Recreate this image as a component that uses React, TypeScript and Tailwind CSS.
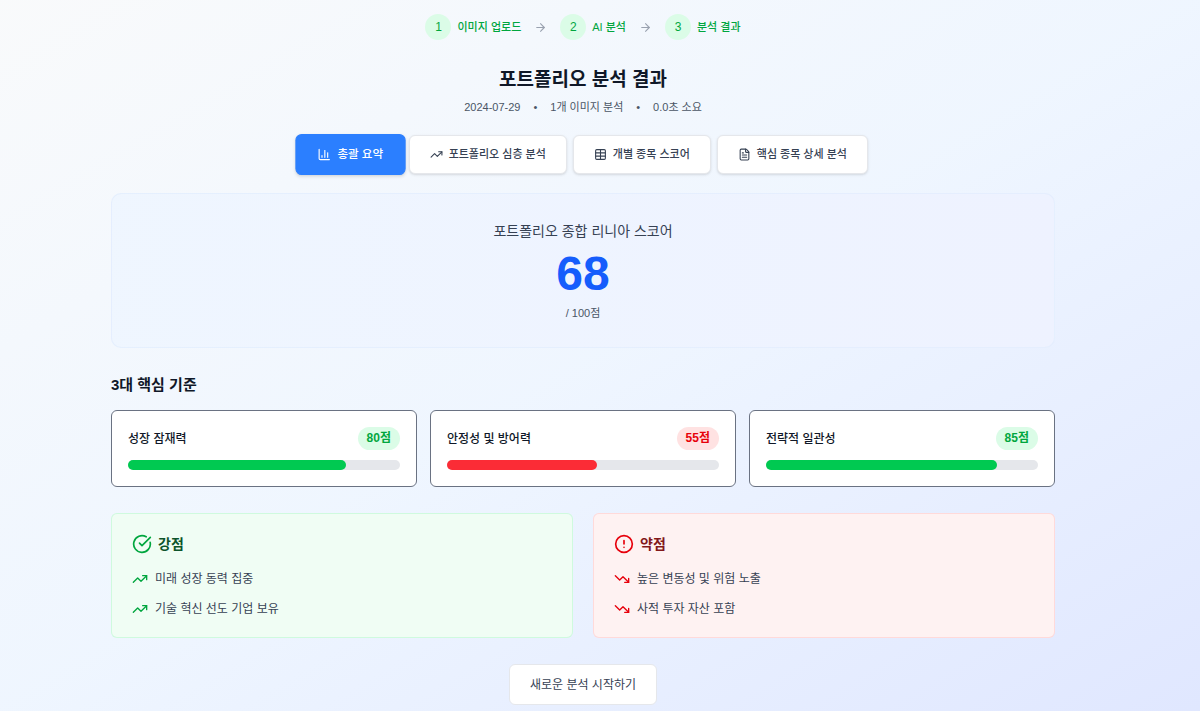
import { Fragment, useState } from "react";
import {
  ArrowRight,
  ChartColumn,
  CircleAlert,
  CircleCheckBig,
  FileText,
  Table,
  TrendingDown,
  TrendingUp,
} from "lucide-react";
import { clsx } from "clsx";

const steps = ["이미지 업로드", "AI 분석", "분석 결과"];

const tabs = [
  { id: "summary", label: "총괄 요약", icon: ChartColumn },
  { id: "deep", label: "포트폴리오 심층 분석", icon: TrendingUp },
  { id: "scores", label: "개별 종목 스코어", icon: Table },
  { id: "detail", label: "핵심 종목 상세 분석", icon: FileText },
];

const criteria = [
  { name: "성장 잠재력", score: 80 },
  { name: "안정성 및 방어력", score: 55 },
  { name: "전략적 일관성", score: 85 },
];

const strengths = ["미래 성장 동력 집중", "기술 혁신 선도 기업 보유"];
const weaknesses = ["높은 변동성 및 위험 노출", "사적 투자 자산 포함"];

const Steps = () => (
  <ol className="flex items-center justify-center gap-[13px] text-[11px] font-medium text-green-600">
    {steps.map((step, i) => (
      <Fragment key={step}>
        {i > 0 && (
          <li aria-hidden="true">
            <ArrowRight className="size-[13px] text-gray-400" />
          </li>
        )}
        <li className="flex items-center gap-[6px]">
          <span className="flex size-[26px] items-center justify-center rounded-full bg-green-100 text-xs">
            {i + 1}
          </span>
          <span>{step}</span>
        </li>
      </Fragment>
    ))}
  </ol>
);

const CriterionCard = ({ name, score }: { name: string; score: number }) => {
  const good = score >= 70;
  return (
    <div className="rounded-md border border-gray-500 bg-white p-4">
      <div className="flex items-center justify-between">
        <h3 className="text-xs font-medium text-gray-900">{name}</h3>
        <span
          className={clsx(
            "rounded-full px-[9px] text-xs/[23px] font-semibold",
            good ? "bg-green-100 text-green-600" : "bg-red-100 text-red-600"
          )}
        >
          {score}점
        </span>
      </div>
      <div className="mt-[10px] h-[10px] rounded-full bg-gray-200">
        <div
          className={clsx(
            "h-full rounded-full",
            good ? "bg-green-500" : "bg-red-500"
          )}
          style={{ width: `${score}%` }}
        />
      </div>
    </div>
  );
};

export default function App() {
  const [active, setActive] = useState("summary");

  return (
    <div className="min-h-screen bg-linear-to-br from-gray-50 via-blue-50 to-indigo-100 pr-[34px] font-['Liberation_Sans','Noto_Sans_CJK_KR',sans-serif]">
      <main className="mx-auto max-w-[944px] pt-[14px] pb-[6px]">
        <Steps />

        <header className="mt-[26px] text-center">
          <h1 className="text-[19px]/7 font-semibold text-gray-900">
            포트폴리오 분석 결과
          </h1>
          <div className="mt-[3px] flex justify-center gap-[13px] text-[11px]/5 text-gray-600">
            <span>2024-07-29</span>
            <span>•</span>
            <span>1개 이미지 분석</span>
            <span>•</span>
            <span>0.0초 소요</span>
          </div>
        </header>

        <nav className="mt-[18px] flex justify-center gap-[6px]">
          {tabs.map(({ id, label, icon: Icon }) => (
            <button
              key={id}
              type="button"
              onClick={() => setActive(id)}
              className={clsx(
                "flex h-[39px] items-center gap-[6px] rounded-md border px-5 text-[11px] font-medium shadow-sm",
                active === id
                  ? "scale-105 border-blue-500 bg-blue-500 text-white"
                  : "border-gray-200 bg-white text-gray-700"
              )}
            >
              <Icon className="size-[13px]" />
              {label}
            </button>
          ))}
        </nav>

        <section className="mt-[19px] rounded-[10px] border border-blue-100/50 bg-linear-to-r from-blue-50 to-indigo-50 pt-[26px] pb-[24px] text-center">
          <h2 className="text-sm/[22px] text-gray-700">
            포트폴리오 종합 리니아 스코어
          </h2>
          <p className="mt-[7px] text-5xl/[50px] font-bold text-blue-600">
            68
          </p>
          <p className="mt-[4px] text-[11px]/5 text-gray-600">/ 100점</p>
        </section>

        <section className="mt-[26px]">
          <h2 className="text-[15px]/[22px] font-semibold text-gray-900">
            3대 핵심 기준
          </h2>
          <div className="mt-[14px] grid grid-cols-3 gap-[13px]">
            {criteria.map((item) => (
              <CriterionCard key={item.name} {...item} />
            ))}
          </div>
        </section>

        <div className="mt-[26px] grid grid-cols-2 gap-5">
          <section className="rounded-md border border-green-200/60 bg-green-50 px-5 pt-5 pb-[18px]">
            <h2 className="flex items-center gap-[6px] text-sm/5 font-semibold text-green-900">
              <CircleCheckBig className="size-5 text-green-600" />
              강점
            </h2>
            <ul className="mt-[15px] space-y-[10px] text-xs/5 text-gray-700">
              {strengths.map((text) => (
                <li key={text} className="flex items-center gap-[7px]">
                  <TrendingUp className="size-4 text-green-600" />
                  {text}
                </li>
              ))}
            </ul>
          </section>
          <section className="rounded-md border border-red-200/60 bg-red-50 px-5 pt-5 pb-[18px]">
            <h2 className="flex items-center gap-[6px] text-sm/5 font-semibold text-red-900">
              <CircleAlert className="size-5 text-red-600" />
              약점
            </h2>
            <ul className="mt-[15px] space-y-[10px] text-xs/5 text-gray-700">
              {weaknesses.map((text) => (
                <li key={text} className="flex items-center gap-[7px]">
                  <TrendingDown className="size-4 text-red-600" />
                  {text}
                </li>
              ))}
            </ul>
          </section>
        </div>

        <div className="mt-[26px] flex justify-center">
          <button
            type="button"
            className="h-[41px] rounded-md border border-gray-200 bg-white px-5 text-xs text-gray-700"
          >
            새로운 분석 시작하기
          </button>
        </div>
      </main>
    </div>
  );
}
